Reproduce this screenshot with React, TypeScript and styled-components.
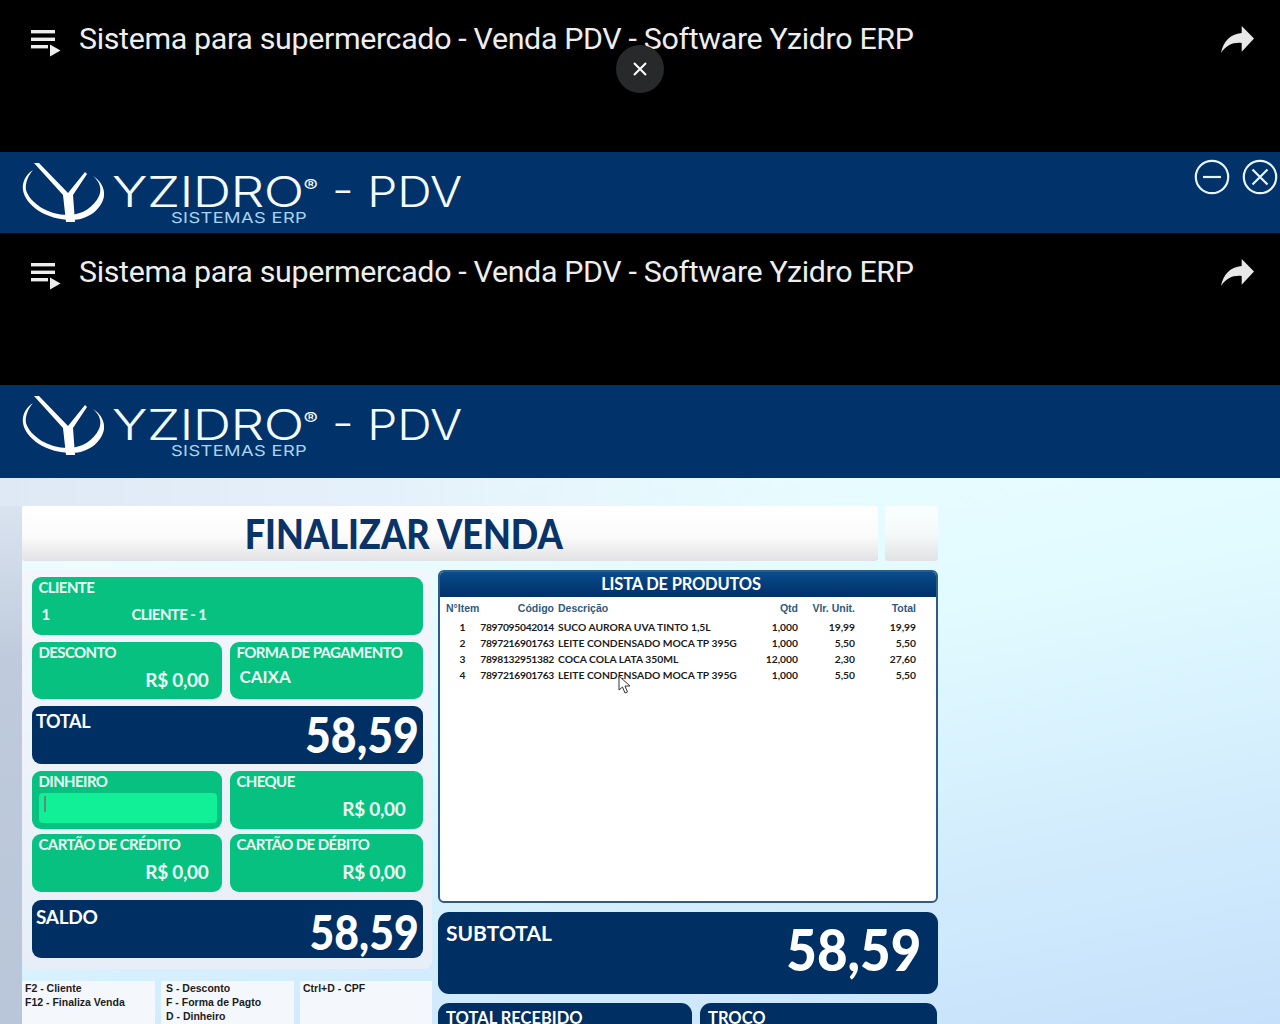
import { createGlobalStyle, styled } from "styled-components";

const navy = "#002f63";
const green = "#06c17f";

const products = [
  { id: 1, code: "7897095042014", name: "SUCO AURORA UVA TINTO 1,5L", qty: "1,000", unit: "19,99", total: "19,99" },
  { id: 2, code: "7897216901763", name: "LEITE CONDENSADO MOCA TP 395G", qty: "1,000", unit: "5,50", total: "5,50" },
  { id: 3, code: "7898132951382", name: "COCA COLA LATA 350ML", qty: "12,000", unit: "2,30", total: "27,60" },
  { id: 4, code: "7897216901763", name: "LEITE CONDENSADO MOCA TP 395G", qty: "1,000", unit: "5,50", total: "5,50" },
];

const PlaylistIcon = () => (
  <svg width="32" height="30" viewBox="0 0 32 30" fill="#eeeeee">
    <rect x="1" y="1" width="24" height="3.4" />
    <rect x="1" y="8.6" width="24" height="3.4" />
    <rect x="1" y="16" width="17" height="3.4" />
    <path d="M20 15.5 L30.5 21.5 L20 27.5 Z" />
  </svg>
);

const ShareIcon = () => (
  <svg width="34" height="28" viewBox="0 0 34 28" fill="#e8e8e8">
    <path d="M20.7 0 L33 12.5 L20.7 25.7 V17 C13 16 5 19 0 27 C2 16 9 8 20.7 7 Z" />
  </svg>
);

const LogoMark = () => (
  <svg width="84" height="60" viewBox="0 0 84 60" fill="#ffffff">
    <path d="M11 7 C3 12 0 20 1 27 C3 42 24 57 50 57 C66 57 80 46 82 33 C83 25 78 17 71 13 C78 19 80 26 77 33 C72 44 60 52 46 52 C26 52 8 40 4 27 C3 20 6 13 11 7 Z" />
    <path d="M12 0 L17 0 L46 30 L63 9 L65 11 L51 32 L53 59 L44 59 L41 32 Z" />
  </svg>
);

const Logo = () => (
  <LogoRow>
    <LogoMark />
    <LogoWords>
      <LogoName>
        YZIDRO<sup>®</sup>
      </LogoName>
      <LogoSub>SISTEMAS ERP</LogoSub>
    </LogoWords>
    <LogoPdv>- PDV</LogoPdv>
  </LogoRow>
);

const VideoHeader = () => (
  <VideoBar>
    <PlaylistIcon />
    <VideoTitle>Sistema para supermercado - Venda PDV - Software Yzidro ERP</VideoTitle>
    <ShareIcon />
  </VideoBar>
);

const RoundButton = ({ kind }: { kind: "min" | "close" }) => (
  <svg width="36" height="36" viewBox="0 0 36 36" fill="none" stroke="#e6f4fb" strokeWidth="2.2">
    <circle cx="18" cy="18" r="16.2" />
    {kind === "min" ? (
      <path d="M9 18 H27" />
    ) : (
      <path d="M10.5 10.5 L25.5 25.5 M25.5 10.5 L10.5 25.5" />
    )}
  </svg>
);

const MoneyCard = ({ label, value, inset }: { label: string; value: string; inset?: boolean }) => (
  <GreenCard>
    <GreenLabel>{label}</GreenLabel>
    <Money $inset={inset}>{value}</Money>
  </GreenCard>
);

export default function App() {
  return (
    <Page>
      <GlobalStyle />
      <VideoHeader />
      <CloseOverlay aria-label="Fechar">
        <svg width="16" height="16" viewBox="0 0 16 16" stroke="#ffffff" strokeWidth="2">
          <path d="M2 2 L14 14 M14 2 L2 14" />
        </svg>
      </CloseOverlay>
      <LogoBand $height={81}>
        <Logo />
        <WindowButtons>
          <RoundButton kind="min" />
          <RoundButton kind="close" />
        </WindowButtons>
      </LogoBand>
      <VideoHeader />
      <LogoBand $height={93}>
        <Logo />
      </LogoBand>
      <Screen>
        <TitleRow>
          <TitleBox>
            <TitleText>FINALIZAR VENDA</TitleText>
          </TitleBox>
          <TitleSide />
        </TitleRow>
        <Columns>
          <LeftColumn>
            <LeftPanel>
              <GreenCard>
                <GreenLabel>CLIENTE</GreenLabel>
                <ClientRow>
                  <span>1</span>
                  <span>CLIENTE - 1</span>
                </ClientRow>
              </GreenCard>
              <Pair>
                <MoneyCard label="DESCONTO" value="R$ 0,00" />
                <GreenCard>
                  <GreenLabel>FORMA DE PAGAMENTO</GreenLabel>
                  <PayMethod>CAIXA</PayMethod>
                </GreenCard>
              </Pair>
              <NavyCard>
                <NavyLabel $size={18}>TOTAL</NavyLabel>
                <BigValue $size={50} $lineHeight={50}>58,59</BigValue>
              </NavyCard>
              <Pair>
                <GreenCard>
                  <GreenLabel>DINHEIRO</GreenLabel>
                  <CashInput>
                    <Caret />
                  </CashInput>
                </GreenCard>
                <MoneyCard label="CHEQUE" value="R$ 0,00" inset />
              </Pair>
              <Pair $tight>
                <MoneyCard label="CARTÃO DE CRÉDITO" value="R$ 0,00" />
                <MoneyCard label="CARTÃO DE DÉBITO" value="R$ 0,00" inset />
              </Pair>
              <NavyCard $spaced>
                <NavyLabel $size={19}>SALDO</NavyLabel>
                <BigValue $size={48} $lineHeight={54}>58,59</BigValue>
              </NavyCard>
            </LeftPanel>
            <Shortcuts>
              <ShortcutBox>
                <div>F2 - Cliente</div>
                <div>F12 - Finaliza Venda</div>
              </ShortcutBox>
              <ShortcutBox>
                <div>S - Desconto</div>
                <div>F - Forma de Pagto</div>
                <div>D - Dinheiro</div>
              </ShortcutBox>
              <ShortcutBox>
                <div>Ctrl+D - CPF</div>
              </ShortcutBox>
            </Shortcuts>
          </LeftColumn>
          <RightColumn>
            <ProductList>
              <ListHead>LISTA DE PRODUTOS</ListHead>
              <ListBody>
                <HeaderRow>
                  <span>N°Item</span>
                  <Right>Código</Right>
                  <Desc>Descrição</Desc>
                  <Right>Qtd</Right>
                  <Right>Vlr. Unit.</Right>
                  <Right>Total</Right>
                </HeaderRow>
                {products.map((p) => (
                  <ItemRow key={p.id}>
                    <Center>{p.id}</Center>
                    <Code>{p.code}</Code>
                    <Desc>{p.name}</Desc>
                    <Right>{p.qty}</Right>
                    <Right>{p.unit}</Right>
                    <Right>{p.total}</Right>
                  </ItemRow>
                ))}
                <Cursor width="14" height="20" viewBox="0 0 14 20">
                  <path d="M1 1 L1 15 L4.5 12 L7 18 L9.5 17 L7 11 L12 11 Z" fill="#ffffff" stroke="#333333" strokeWidth="1" />
                </Cursor>
              </ListBody>
            </ProductList>
            <SubtotalCard>
              <SubtotalLabel>SUBTOTAL</SubtotalLabel>
              <SubtotalValue>58,59</SubtotalValue>
            </SubtotalCard>
            <BottomPair>
              <BottomCard $width={254}>TOTAL RECEBIDO</BottomCard>
              <BottomCard $width={237}>TROCO</BottomCard>
            </BottomPair>
          </RightColumn>
        </Columns>
      </Screen>
    </Page>
  );
}

const GlobalStyle = createGlobalStyle`
  html, body {
    margin: 0;
    padding: 0;
    background: #000;
  }
  * {
    box-sizing: border-box;
  }
`;

const Page = styled.div`
  position: relative;
  width: 1280px;
  height: 1024px;
  overflow: hidden;
  background: #000;
  font-family: "Lato", "Liberation Sans", sans-serif;
`;

const VideoBar = styled.div`
  height: 152px;
  display: flex;
  align-items: flex-start;
  padding: 16px 25px 0 30px;
  color: #eeeeee;

  > svg:first-child {
    margin-top: 13px;
    margin-right: 17px;
  }
  > svg:last-child {
    margin-top: 10px;
  }
`;

const VideoTitle = styled.div`
  flex: 1;
  margin-top: 1px;
  font-family: "Roboto", sans-serif;
  font-size: 30.4px;
  line-height: 44px;
  letter-spacing: -0.35px;
  white-space: nowrap;
`;

const CloseOverlay = styled.button`
  position: absolute;
  left: 616px;
  top: 45px;
  width: 48px;
  height: 48px;
  border: 0;
  padding: 0;
  border-radius: 50%;
  background: #28292b;
  display: flex;
  align-items: center;
  justify-content: center;
`;

const LogoBand = styled.div<{ $height: number }>`
  height: ${({ $height }) => $height}px;
  background: #01326a;
  display: flex;
  justify-content: space-between;
  align-items: flex-start;
  padding: 11px 2px 0 22px;
`;

const LogoRow = styled.div`
  display: flex;
  align-items: flex-start;
  color: #f4fbff;
`;

const LogoWords = styled.div`
  display: flex;
  flex-direction: column;
  margin-left: 6px;
  width: 220px;
`;

const LogoName = styled.div`
  font-family: "Inter", sans-serif;
  font-size: 42px;
  font-weight: 300;
  line-height: 34px;
  height: 34px;
  margin-top: 12px;
  letter-spacing: -0.5px;
  white-space: nowrap;
  transform: scaleX(1.27);
  transform-origin: left center;

  sup {
    font-size: 17px;
    font-weight: 400;
    line-height: 0;
    vertical-align: 15px;
    letter-spacing: 0;
  }
`;

const LogoSub = styled.div`
  font-family: "Inter", sans-serif;
  font-size: 15px;
  font-weight: 400;
  line-height: 14px;
  margin: 2px 0 0 59px;
  color: #a9d3ee;
  letter-spacing: 0.3px;
  white-space: nowrap;
  transform: scaleX(1.22);
  transform-origin: left center;
`;

const LogoPdv = styled.div`
  font-family: "Inter", sans-serif;
  font-size: 42px;
  font-weight: 300;
  line-height: 34px;
  margin-top: 12px;
  white-space: pre;
  transform: scaleX(1.14);
  transform-origin: left center;
`;

const WindowButtons = styled.div`
  display: flex;
  gap: 12px;
  margin-top: -4px;
`;

const Screen = styled.div`
  height: 546px;
  overflow: hidden;
  padding: 28px 342px 0 22px;
  background:
    linear-gradient(90deg, #dfe9f6 0, #e4eff9 300px, rgba(232, 246, 252, 0) 820px) top / 100% 28px no-repeat,
    linear-gradient(180deg, #dfe8f4 0, #bfcbdc 180px, #b9c6d9 100%) left top / 22px 100% no-repeat,
    linear-gradient(168deg, #eefdff 0%, #e2fbff 40%, #d2ecfd 72%, #c6e0fb 100%);
`;

const TitleRow = styled.div`
  display: flex;
  gap: 7px;
  height: 55px;
`;

const TitleBox = styled.div`
  flex: 1;
  border-radius: 3px;
  background: linear-gradient(180deg, #ffffff 0%, #fbfbfb 55%, #e2e2e4 100%);
  line-height: 55px;
  text-align: center;
  padding-right: 93px;
  white-space: nowrap;
`;

const TitleText = styled.span`
  display: inline-block;
  color: #0a3468;
  font-size: 41px;
  font-weight: 900;
  transform: scaleX(0.88);
`;

const TitleSide = styled.div`
  width: 53px;
  border-radius: 3px;
  background: linear-gradient(180deg, #f8feff 0%, #f6f9fa 50%, #e2e2e4 100%);
`;

const Columns = styled.div`
  display: flex;
  gap: 6px;
  margin-top: 8px;
`;

const LeftColumn = styled.div`
  width: 410px;
  flex: none;
  display: flex;
  flex-direction: column;
  gap: 12px;
`;

const LeftPanel = styled.div`
  height: 400px;
  padding: 8px 9px 0 10px;
  border-radius: 8px;
  background: linear-gradient(180deg, #f3f7fc 0%, #e8eef7 100%);
  display: flex;
  flex-direction: column;
  gap: 7px;
`;

const Pair = styled.div<{ $tight?: boolean }>`
  display: grid;
  grid-template-columns: 190px 193px;
  gap: 8px;
  margin-top: ${({ $tight }) => ($tight ? "-1.5px" : "0")};
`;

const GreenCard = styled.div`
  height: 57.5px;
  border-radius: 9px;
  background: ${green};
  color: #eefaf5;
  padding: 2px 6.5px;
  display: flex;
  flex-direction: column;
  font-weight: 700;
`;

const GreenLabel = styled.div`
  font-size: 15px;
  line-height: 17px;
  letter-spacing: -0.6px;
  white-space: nowrap;
`;

const ClientRow = styled.div`
  display: grid;
  grid-template-columns: 90px 1fr;
  font-size: 15px;
  line-height: 18px;
  letter-spacing: -0.6px;
  padding: 9px 0 0 3px;
`;

const Money = styled.div<{ $inset?: boolean }>`
  font-size: 19px;
  line-height: 22px;
  margin-top: 8px;
  padding-right: ${({ $inset }) => ($inset ? "11px" : "7px")};
  letter-spacing: -0.3px;
  text-align: right;
  white-space: nowrap;
`;

const PayMethod = styled.div`
  font-size: 17px;
  line-height: 20px;
  margin-top: 6px;
  padding-left: 3px;
`;

const CashInput = styled.div`
  height: 30px;
  margin-top: 3px;
  margin-right: -1px;
  border-radius: 4px;
  background: #11f097;
  padding: 3px 5px;
`;

const Caret = styled.div`
  width: 2px;
  height: 16px;
  background: #608a7c;
`;

const NavyCard = styled.div<{ $spaced?: boolean }>`
  height: 58px;
  margin: ${({ $spaced }) => ($spaced ? "1px 0 0" : "0")};
  border-radius: 9px;
  background: ${navy};
  color: #ffffff;
  display: flex;
  justify-content: space-between;
  padding: ${({ $spaced }) => ($spaced ? "5px" : "3px")} 4px 0 4px;
`;

const NavyLabel = styled.div<{ $size: number }>`
  font-size: ${({ $size }) => $size}px;
  line-height: 24px;
  font-weight: 700;
  letter-spacing: -0.3px;
`;

const BigValue = styled.div<{ $size: number; $lineHeight: number }>`
  font-size: ${({ $size }) => $size}px;
  line-height: ${({ $lineHeight }) => $lineHeight}px;
  font-weight: 900;
  transform: scaleX(0.89);
  transform-origin: right center;
`;

const Shortcuts = styled.div`
  display: grid;
  grid-template-columns: 133px 133px 132px;
  gap: 6px;
`;

const ShortcutBox = styled.div`
  height: 60px;
  background: #f4f8fd;
  color: #1c1c1c;
  font-family: "Liberation Sans", sans-serif;
  font-size: 10.5px;
  font-weight: 700;
  line-height: 14px;
  padding: 0 3px;
  white-space: nowrap;

  &:nth-child(2) {
    padding-left: 5px;
  }
`;

const RightColumn = styled.div`
  width: 500px;
  flex: none;
  display: flex;
  flex-direction: column;
  margin-top: 1px;
`;

const ProductList = styled.div`
  height: 333px;
  border: 2px solid #2d5c88;
  border-radius: 6px;
  background: #ffffff;
  overflow: hidden;
`;

const ListHead = styled.div`
  height: 25px;
  background: linear-gradient(180deg, #0a4d8f 0%, #033a75 60%, #01326a 100%);
  color: #ffffff;
  font-size: 16.5px;
  font-weight: 700;
  line-height: 24px;
  text-align: center;
  padding-right: 14px;
  letter-spacing: -0.2px;
`;

const ListBody = styled.div`
  position: relative;
  padding: 0 20px 0 6px;
`;

const HeaderRow = styled.div`
  display: grid;
  grid-template-columns: 34px 74px 1fr 50px 57px 61px;
  height: 22px;
  align-items: center;
  font-family: "Liberation Sans", sans-serif;
  font-size: 10.5px;
  font-weight: 700;
  color: #2e5a80;
  white-space: nowrap;
`;

const ItemRow = styled(HeaderRow)`
  height: 16px;
  color: #1c1c1c;
  font-family: "Lato", sans-serif;
  font-size: 10.3px;
`;

const Right = styled.span`
  text-align: right;
`;

const Code = styled(Right)`
  letter-spacing: -0.3px;
`;

const Center = styled.span`
  text-align: center;
  padding-right: 1px;
`;

const Desc = styled.span`
  padding-left: 4px;
`;

const Cursor = styled.svg`
  position: absolute;
  left: 178px;
  top: 78px;
`;

const SubtotalCard = styled.div`
  height: 82px;
  margin-top: 9px;
  border-radius: 11px;
  background: ${navy};
  color: #ffffff;
  display: flex;
  justify-content: space-between;
  padding: 4px 17px 0 8px;
`;

const SubtotalLabel = styled.div`
  font-size: 21px;
  line-height: 32px;
  margin-top: 1px;
  font-weight: 700;
`;

const SubtotalValue = styled.div`
  font-size: 58px;
  line-height: 66px;
  font-weight: 900;
  transform: scaleX(0.91);
  transform-origin: right center;
`;

const BottomPair = styled.div`
  display: flex;
  gap: 8px;
  margin-top: 9px;
`;

const BottomCard = styled.div<{ $width: number }>`
  width: ${({ $width }) => $width}px;
  height: 70px;
  border-radius: 11px;
  background: ${navy};
  color: #ffffff;
  font-size: 16.5px;
  font-weight: 700;
  line-height: 28px;
  padding: 1px 8px;
`;
